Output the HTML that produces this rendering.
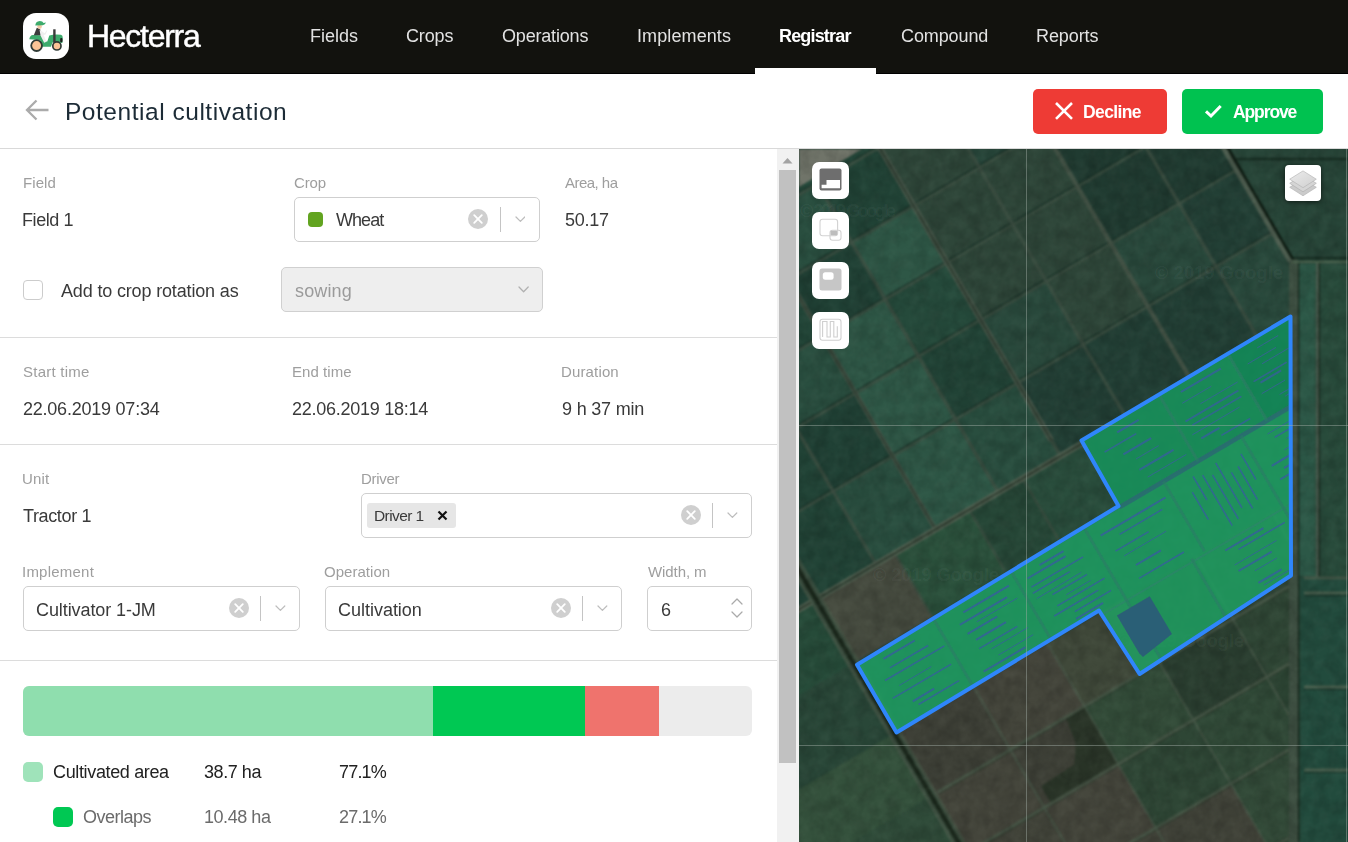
<!DOCTYPE html>
<html><head><meta charset="utf-8"><title>Hecterra</title>
<style>
html,body{margin:0;padding:0}
body{width:1348px;height:842px;position:relative;overflow:hidden;background:#fff;font-family:"Liberation Sans",sans-serif}
.a{position:absolute}
.t{position:absolute;white-space:nowrap;line-height:1;will-change:transform}
#hdr{left:0;top:0;width:1348px;height:73px;background:#12120e;border-bottom:1px solid #000}
#logo{left:23px;top:13px;width:46px;height:46px;border-radius:13px;background:#fff}
#ul{left:755px;top:68px;width:121px;height:6px;background:#fff}
#sub{left:0;top:148px;width:1348px;height:1px;background:#d9d9d9}
.btn{top:89px;height:45px;border-radius:5px}
#track{left:777px;top:149px;width:22px;height:693px;background:#f1f1f1}
#thumb{left:779px;top:170px;width:17px;height:593px;background:#c1c1c1}
#map{left:799px;top:149px;width:549px;height:693px;overflow:hidden;background:#1f473d}
.mb{width:37px;height:37px;border-radius:7px;background:#fff;left:13px}
</style></head><body>
<div id="hdr" class="a"></div>
<div id="logo" class="a">
<svg width="46" height="46" viewBox="23 13 46 46">
<path d="M29.300 39.200Q29.800 35.400 33 35.100L41.500 35.300L45 41.600L47.300 41.600L49.300 35.400Q55 33.900 61 34.800Q62.900 35.200 62.700 37.500L62.400 43L52.500 42.500L51 46.800L42 46.800L40 40Z" fill="#3dab6c"/>
<rect x="53.200" y="29.300" width="2.400" height="13.500" fill="#3a3a3a"/>
<rect x="60.200" y="38" width="2.300" height="4.200" rx="1" fill="#1d1d1d"/>
<path d="M33.800 35.200L36.800 27.800L40 29L42.500 35.300Z" fill="#3b3b3b"/>
<path d="M39.500 29.500L44.500 33.200L46.800 30.200L47.300 30.600L45.600 34.600L43.600 35L46.500 41.800L44.200 42.800L40.500 35.500Z" fill="#efefef"/>
<circle cx="39.600" cy="26.600" r="2.300" fill="#f2c9a5"/>
<path d="M35.300 25.600Q35.500 21.300 39.800 21Q42.600 21 43.600 23L46 22.600Q45.200 24.800 42.800 25.200Z" fill="#3dab6c"/>
<circle cx="36.600" cy="45.600" r="5.400" fill="#fbc396" stroke="#2f3a35" stroke-width="1.800"/>
<circle cx="56.900" cy="45.900" r="4.100" fill="#fbc396" stroke="#2f3a35" stroke-width="1.700"/>
</svg></div>
<div id="ul" class="a"></div>
<svg class="a" style="left:24px;top:98px" width="26" height="24" viewBox="24 98 26 24"><path d="M48.500 110H27.500M36.500 100.500L27 110l9.500 9.500" fill="none" stroke="#ababab" stroke-width="2.300"/></svg>
<div class="a btn" style="left:1033px;width:134px;background:#ee3b35"></div>
<div class="a btn" style="left:1182px;width:141px;background:#00c250"></div>
<svg class="a" style="left:1053px;top:100px" width="22" height="22" viewBox="1053 100 22 22"><path d="M1056 103l16 15.800M1072 103l-16 15.800" stroke="#fff" stroke-width="2.600"/></svg>
<svg class="a" style="left:1203px;top:102px" width="22" height="18" viewBox="1203 102 22 18"><path d="M1206 111.300l5 4.700 9.700-10" fill="none" stroke="#fff" stroke-width="3"/></svg>
<div id="sub" class="a"></div>
<div class="a" style="left:294px;top:197px;width:246px;height:45px;background:#fff;border:1px solid #cfcfcf;border-radius:5px;box-sizing:border-box"></div>
<div class="a" style="left:308px;top:212px;width:15px;height:15px;border-radius:4px;background:#62a420"></div>
<svg class="a" style="left:468.4px;top:209.3px" width="20" height="20" viewBox="0 0 20 20"><circle cx="10" cy="10" r="10" fill="#cfcfcf"/><path d="M6.2 6.2L13.8 13.8M13.8 6.2L6.2 13.8" stroke="#fff" stroke-width="1.8" stroke-linecap="round"/></svg>
<div class="a" style="left:500px;top:207px;width:1px;height:25px;background:#c4c4c4"></div>
<svg class="a" style="left:514.6px;top:216.3px" width="10.8" height="6.4" viewBox="-1 -1 10.8 6.4"><path d="M0 0L4.4 4.4L8.8 0" fill="none" stroke="#bdbdbd" stroke-width="1.25" stroke-linecap="round" stroke-linejoin="round"/></svg>
<div class="a" style="left:281px;top:267px;width:262px;height:45px;background:#eeeeee;border:1px solid #d0d0d0;border-radius:5px;box-sizing:border-box"></div>
<svg class="a" style="left:518.0px;top:286.20000000000005px" width="11.2" height="6.8" viewBox="-1 -1 11.2 6.8"><path d="M0 0L4.6 4.8L9.2 0" fill="none" stroke="#b0b0b0" stroke-width="1.25" stroke-linecap="round" stroke-linejoin="round"/></svg>
<div class="a" style="left:23px;top:280px;width:20px;height:20px;background:#fff;border:1px solid #cccccc;border-radius:4px;box-sizing:border-box"></div>
<div class="a" style="left:0;top:337px;width:778px;height:1px;background:#dcdcdc"></div>
<div class="a" style="left:0;top:444px;width:778px;height:1px;background:#dcdcdc"></div>
<div class="a" style="left:0;top:660px;width:778px;height:1px;background:#dcdcdc"></div>
<div class="a" style="left:361px;top:493px;width:391px;height:45px;background:#fff;border:1px solid #cfcfcf;border-radius:5px;box-sizing:border-box"></div>
<div class="a" style="left:367px;top:503px;width:89px;height:25px;border-radius:3px;background:#e6e6e6"></div>
<svg class="a" style="left:437px;top:510px" width="11" height="11" viewBox="0 0 11 11"><path d="M1.5 1.5L9.5 9.5M9.5 1.5L1.5 9.5" stroke="#111" stroke-width="2.2"/></svg>
<svg class="a" style="left:681px;top:505px" width="20" height="20" viewBox="0 0 20 20"><circle cx="10" cy="10" r="10" fill="#cfcfcf"/><path d="M6.2 6.2L13.8 13.8M13.8 6.2L6.2 13.8" stroke="#fff" stroke-width="1.8" stroke-linecap="round"/></svg>
<div class="a" style="left:712px;top:503px;width:1px;height:25px;background:#c4c4c4"></div>
<svg class="a" style="left:727.1px;top:512.3px" width="10.8" height="6.4" viewBox="-1 -1 10.8 6.4"><path d="M0 0L4.4 4.4L8.8 0" fill="none" stroke="#bdbdbd" stroke-width="1.25" stroke-linecap="round" stroke-linejoin="round"/></svg>
<div class="a" style="left:23px;top:586px;width:277px;height:45px;background:#fff;border:1px solid #cfcfcf;border-radius:5px;box-sizing:border-box"></div>
<svg class="a" style="left:228.6px;top:598px" width="20" height="20" viewBox="0 0 20 20"><circle cx="10" cy="10" r="10" fill="#cfcfcf"/><path d="M6.2 6.2L13.8 13.8M13.8 6.2L6.2 13.8" stroke="#fff" stroke-width="1.8" stroke-linecap="round"/></svg>
<div class="a" style="left:260px;top:596px;width:1px;height:25px;background:#c4c4c4"></div>
<svg class="a" style="left:275.1px;top:605.3px" width="10.8" height="6.4" viewBox="-1 -1 10.8 6.4"><path d="M0 0L4.4 4.4L8.8 0" fill="none" stroke="#bdbdbd" stroke-width="1.25" stroke-linecap="round" stroke-linejoin="round"/></svg>
<div class="a" style="left:325px;top:586px;width:297px;height:45px;background:#fff;border:1px solid #cfcfcf;border-radius:5px;box-sizing:border-box"></div>
<svg class="a" style="left:551px;top:598px" width="20" height="20" viewBox="0 0 20 20"><circle cx="10" cy="10" r="10" fill="#cfcfcf"/><path d="M6.2 6.2L13.8 13.8M13.8 6.2L6.2 13.8" stroke="#fff" stroke-width="1.8" stroke-linecap="round"/></svg>
<div class="a" style="left:582px;top:596px;width:1px;height:25px;background:#c4c4c4"></div>
<svg class="a" style="left:597.4px;top:605.3px" width="10.8" height="6.4" viewBox="-1 -1 10.8 6.4"><path d="M0 0L4.4 4.4L8.8 0" fill="none" stroke="#bdbdbd" stroke-width="1.25" stroke-linecap="round" stroke-linejoin="round"/></svg>
<div class="a" style="left:647px;top:586px;width:105px;height:45px;background:#fff;border:1px solid #cfcfcf;border-radius:5px;box-sizing:border-box"></div>
<svg class="a" style="left:731.0px;top:598.0px" width="12" height="7" viewBox="-1 -1 12 7"><path d="M0 5L5 0L10 5" fill="none" stroke="#aaaaaa" stroke-width="1.25" stroke-linecap="round" stroke-linejoin="round"/></svg>
<svg class="a" style="left:731.0px;top:610.5px" width="12" height="7" viewBox="-1 -1 12 7"><path d="M0 0L5.0 5L10 0" fill="none" stroke="#aaaaaa" stroke-width="1.25" stroke-linecap="round" stroke-linejoin="round"/></svg>
<div class="a" style="left:23px;top:686px;width:729px;height:50px;border-radius:6px;background:#ececec;overflow:hidden"><div class="a" style="left:0;top:0;width:410px;height:50px;background:#8fdeae"></div><div class="a" style="left:410px;top:0;width:152px;height:50px;background:#00c853"></div><div class="a" style="left:562px;top:0;width:74px;height:50px;background:#ef736d"></div></div>
<div class="a" style="left:23px;top:762px;width:20px;height:20px;border-radius:5px;background:#9fe3ba"></div>
<div class="a" style="left:53px;top:807px;width:20px;height:20px;border-radius:5px;background:#00c853"></div>
<span class="t" style="left:87.40px;top:20.00px;font-size:32px;font-weight:400;color:#ffffff;letter-spacing:-1.287px;-webkit-text-stroke:0.45px #fff">Hecterra</span>
<span class="t" style="left:309.59px;top:27.00px;font-size:18px;font-weight:400;color:#e2e2e2;letter-spacing:-0.009px">Fields</span>
<span class="t" style="left:406.16px;top:27.00px;font-size:18px;font-weight:400;color:#e2e2e2;letter-spacing:-0.152px">Crops</span>
<span class="t" style="left:502.16px;top:27.00px;font-size:18px;font-weight:400;color:#e2e2e2;letter-spacing:-0.183px">Operations</span>
<span class="t" style="left:636.59px;top:27.00px;font-size:18px;font-weight:400;color:#e2e2e2;letter-spacing:0.104px">Implements</span>
<span class="t" style="left:779.38px;top:27.00px;font-size:18px;font-weight:700;color:#ffffff;letter-spacing:-0.831px">Registrar</span>
<span class="t" style="left:900.66px;top:27.00px;font-size:18px;font-weight:400;color:#e2e2e2;letter-spacing:-0.100px">Compound</span>
<span class="t" style="left:1036.09px;top:27.00px;font-size:18px;font-weight:400;color:#e2e2e2;letter-spacing:-0.093px">Reports</span>
<span class="t" style="left:64.89px;top:100.25px;font-size:24.5px;font-weight:400;color:#1c2b36;letter-spacing:0.530px">Potential cultivation</span>
<span class="t" style="left:1082.91px;top:104.25px;font-size:17.5px;font-weight:700;color:#ffffff;letter-spacing:-0.620px">Decline</span>
<span class="t" style="left:1232.73px;top:104.25px;font-size:17.5px;font-weight:700;color:#ffffff;letter-spacing:-1.112px">Approve</span>
<span class="t" style="left:22.63px;top:175.00px;font-size:15px;font-weight:400;color:#9e9e9e;letter-spacing:0.075px">Field</span>
<span class="t" style="left:293.60px;top:175.00px;font-size:15px;font-weight:400;color:#9e9e9e;letter-spacing:-0.167px">Crop</span>
<span class="t" style="left:565.00px;top:175.00px;font-size:15px;font-weight:400;color:#9e9e9e;letter-spacing:-0.528px">Area, ha</span>
<span class="t" style="left:22.39px;top:211.00px;font-size:18px;font-weight:400;color:#3a3a3a;letter-spacing:-0.432px">Field 1</span>
<span class="t" style="left:336.00px;top:211.00px;font-size:18px;font-weight:400;color:#3a3a3a;letter-spacing:-0.946px">Wheat</span>
<span class="t" style="left:564.74px;top:211.00px;font-size:18px;font-weight:400;color:#3a3a3a;letter-spacing:-0.288px">50.17</span>
<span class="t" style="left:60.90px;top:282.00px;font-size:18px;font-weight:400;color:#3a3a3a;letter-spacing:-0.157px">Add to crop rotation as</span>
<span class="t" style="left:294.72px;top:282.00px;font-size:18px;font-weight:400;color:#9a9a9a;letter-spacing:0.132px">sowing</span>
<span class="t" style="left:22.63px;top:364.00px;font-size:15px;font-weight:400;color:#9e9e9e;letter-spacing:0.244px">Start time</span>
<span class="t" style="left:291.73px;top:364.00px;font-size:15px;font-weight:400;color:#9e9e9e;letter-spacing:0.055px">End time</span>
<span class="t" style="left:561.13px;top:364.00px;font-size:15px;font-weight:400;color:#9e9e9e;letter-spacing:0.145px">Duration</span>
<span class="t" style="left:22.56px;top:400.00px;font-size:18px;font-weight:400;color:#3a3a3a;letter-spacing:-0.229px">22.06.2019 07:34</span>
<span class="t" style="left:292.16px;top:400.00px;font-size:18px;font-weight:400;color:#3a3a3a;letter-spacing:-0.256px">22.06.2019 18:14</span>
<span class="t" style="left:561.66px;top:400.00px;font-size:18px;font-weight:400;color:#3a3a3a;letter-spacing:-0.188px">9 h 37 min</span>
<span class="t" style="left:22.16px;top:471.00px;font-size:15px;font-weight:400;color:#9e9e9e;letter-spacing:0.137px">Unit</span>
<span class="t" style="left:360.83px;top:471.00px;font-size:15px;font-weight:400;color:#9e9e9e;letter-spacing:-0.310px">Driver</span>
<span class="t" style="left:23.12px;top:507.00px;font-size:18px;font-weight:400;color:#3a3a3a;letter-spacing:-0.367px">Tractor 1</span>
<span class="t" style="left:374.09px;top:507.75px;font-size:15.5px;font-weight:400;color:#3a3a3a;letter-spacing:-0.588px">Driver 1</span>
<span class="t" style="left:21.93px;top:564.00px;font-size:15px;font-weight:400;color:#9e9e9e;letter-spacing:0.224px">Implement</span>
<span class="t" style="left:324.30px;top:564.00px;font-size:15px;font-weight:400;color:#9e9e9e;letter-spacing:0.034px">Operation</span>
<span class="t" style="left:647.50px;top:564.00px;font-size:15px;font-weight:400;color:#9e9e9e;letter-spacing:-0.085px">Width, m</span>
<span class="t" style="left:36.26px;top:601.00px;font-size:18px;font-weight:400;color:#3a3a3a;letter-spacing:-0.083px">Cultivator 1-JM</span>
<span class="t" style="left:338.16px;top:601.00px;font-size:18px;font-weight:400;color:#3a3a3a;letter-spacing:-0.019px">Cultivation</span>
<span class="t" style="left:660.66px;top:601.00px;font-size:18px;font-weight:400;color:#3a3a3a;letter-spacing:0.000px">6</span>
<span class="t" style="left:52.56px;top:763.00px;font-size:18px;font-weight:400;color:#222222;letter-spacing:-0.353px">Cultivated area</span>
<span class="t" style="left:204.14px;top:763.00px;font-size:18px;font-weight:400;color:#222222;letter-spacing:-0.435px">38.7 ha</span>
<span class="t" style="left:339.16px;top:763.00px;font-size:18px;font-weight:400;color:#222222;letter-spacing:-0.815px">77.1%</span>
<span class="t" style="left:83.16px;top:808.00px;font-size:18px;font-weight:400;color:#6b6b6b;letter-spacing:-0.517px">Overlaps</span>
<span class="t" style="left:204.18px;top:808.00px;font-size:18px;font-weight:400;color:#6b6b6b;letter-spacing:-0.451px">10.48 ha</span>
<span class="t" style="left:339.16px;top:808.00px;font-size:18px;font-weight:400;color:#6b6b6b;letter-spacing:-0.815px">27.1%</span>
<div id="track" class="a"></div><div id="thumb" class="a"></div>
<svg class="a" style="left:782px;top:157px" width="11" height="7" viewBox="0 0 11 7"><path d="M0.500 6.500L5.500 1l5 5.500z" fill="#a3a3a3"/></svg>
<div id="map" class="a">
<svg class="a" style="left:0;top:0" width="549" height="693" viewBox="799 149 549 693">
<defs><filter id="bl" x="-5%" y="-5%" width="110%" height="110%" color-interpolation-filters="sRGB"><feGaussianBlur stdDeviation="1"/><feColorMatrix type="matrix" values="1 0 0 0 0.012  0 1 0 0 0.004  0 0 1 0 -0.012  0 0 0 1 0"/></filter>
<filter id="nz" x="0" y="0" width="100%" height="100%"><feTurbulence type="fractalNoise" baseFrequency="0.07" numOctaves="3" seed="4"/><feColorMatrix type="matrix" values="0 0 0 0 0  0 0 0 0 0  0 0 0 0 0  0.9 0 0 0 -0.28"/></filter>
<filter id="nz2" x="0" y="0" width="100%" height="100%"><feTurbulence type="fractalNoise" baseFrequency="0.1" numOctaves="2" seed="9"/><feColorMatrix type="matrix" values="0 0 0 0 0.62  0 0 0 0 0.72  0 0 0 0 0.6  0.8 0 0 0 -0.3"/></filter>
<filter id="bl2" x="-5%" y="-5%" width="110%" height="110%"><feGaussianBlur stdDeviation="0.5"/></filter>
<clipPath id="pc"><polygon points="1290.5,316.5 1291.0,575.5 1139.6,674.0 1099.0,610.5 896.5,732.5 857.0,664.7 1118.5,506.0 1081.5,440.5"/></clipPath></defs>
<rect x="799" y="149" width="549" height="693" fill="#22423b"/>
<g filter="url(#bl)">
<polygon points="425.5,330.1 598.0,228.8 634.4,291.0 461.9,392.2" fill="#22493e"/>
<polygon points="461.9,392.2 634.4,291.0 668.8,349.6 496.3,450.8" fill="#1e4239"/>
<polygon points="496.3,450.8 668.8,349.6 702.2,406.5 529.7,507.7" fill="#22493e"/>
<polygon points="529.7,507.7 702.2,406.5 735.6,463.5 563.1,564.6" fill="#22493e"/>
<polygon points="563.1,564.6 735.6,463.5 772.6,526.4 600.1,627.6" fill="#1e4239"/>
<polygon points="600.1,627.6 772.6,526.4 815.6,599.7 643.1,700.9" fill="#1d4038"/>
<polygon points="598.0,228.8 658.4,193.4 694.8,255.5 634.4,291.0" fill="#1e4239"/>
<polygon points="634.4,291.0 694.8,255.5 729.2,314.2 668.8,349.6" fill="#20463c"/>
<polygon points="668.8,349.6 729.2,314.2 762.6,371.1 702.2,406.5" fill="#20463c"/>
<polygon points="702.2,406.5 762.6,371.1 796.0,428.0 735.6,463.5" fill="#1e4239"/>
<polygon points="735.6,463.5 796.0,428.0 832.9,491.0 772.6,526.4" fill="#1e4239"/>
<polygon points="772.6,526.4 832.9,491.0 876.0,564.3 815.6,599.7" fill="#1e4239"/>
<polygon points="658.4,193.4 717.9,158.5 754.3,220.6 694.8,255.5" fill="#1d4038"/>
<polygon points="694.8,255.5 754.3,220.6 788.7,279.3 729.2,314.2" fill="#1d4038"/>
<polygon points="729.2,314.2 788.7,279.3 822.1,336.2 762.6,371.1" fill="#20463c"/>
<polygon points="762.6,371.1 822.1,336.2 855.5,393.1 796.0,428.0" fill="#264d42"/>
<polygon points="796.0,428.0 855.5,393.1 892.5,456.1 832.9,491.0" fill="#1d4038"/>
<polygon points="832.9,491.0 892.5,456.1 935.5,529.4 876.0,564.3" fill="#264d42"/>
<polygon points="717.9,158.5 780.9,121.6 817.3,183.7 754.3,220.6" fill="#20463c"/>
<polygon points="754.3,220.6 817.3,183.7 851.7,242.3 788.7,279.3" fill="#264d42"/>
<polygon points="788.7,279.3 851.7,242.3 885.1,299.3 822.1,336.2" fill="#1d4038"/>
<polygon points="822.1,336.2 885.1,299.3 918.5,356.2 855.5,393.1" fill="#2b5649"/>
<polygon points="855.5,393.1 918.5,356.2 955.4,419.1 892.5,456.1" fill="#2b5649"/>
<polygon points="892.5,456.1 955.4,419.1 998.4,492.5 935.5,529.4" fill="#2b5649"/>
<polygon points="780.9,121.6 843.0,85.1 879.4,147.2 817.3,183.7" fill="#20463c"/>
<polygon points="817.3,183.7 879.4,147.2 913.8,205.9 851.7,242.3" fill="#1e4239"/>
<polygon points="851.7,242.3 913.8,205.9 947.2,262.8 885.1,299.3" fill="#2b5649"/>
<polygon points="885.1,299.3 947.2,262.8 980.6,319.7 918.5,356.2" fill="#22493e"/>
<polygon points="918.5,356.2 980.6,319.7 1017.5,382.7 955.4,419.1" fill="#1e4239"/>
<polygon points="955.4,419.1 1017.5,382.7 1060.5,456.0 998.4,492.5" fill="#264d42"/>
<polygon points="843.0,85.1 908.5,46.7 944.9,108.8 879.4,147.2" fill="#1f3e38"/>
<polygon points="879.4,147.2 944.9,108.8 979.3,167.4 913.8,205.9" fill="#2b453c"/>
<polygon points="913.8,205.9 979.3,167.4 1012.7,224.4 947.2,262.8" fill="#2b453c"/>
<polygon points="947.2,262.8 1012.7,224.4 1046.1,281.3 980.6,319.7" fill="#2b453c"/>
<polygon points="980.6,319.7 1046.1,281.3 1083.1,344.3 1017.5,382.7" fill="#26483f"/>
<polygon points="1017.5,382.7 1083.1,344.3 1126.1,417.6 1060.5,456.0" fill="#1f3e38"/>
<polygon points="908.5,46.7 973.2,8.7 1009.6,70.8 944.9,108.8" fill="#24453d"/>
<polygon points="944.9,108.8 1009.6,70.8 1044.0,129.5 979.3,167.4" fill="#24453d"/>
<polygon points="979.3,167.4 1044.0,129.5 1077.4,186.4 1012.7,224.4" fill="#2b453c"/>
<polygon points="1012.7,224.4 1077.4,186.4 1110.8,243.3 1046.1,281.3" fill="#2b453c"/>
<polygon points="1046.1,281.3 1110.8,243.3 1147.8,306.3 1083.1,344.3" fill="#2b453c"/>
<polygon points="1083.1,344.3 1147.8,306.3 1190.8,379.6 1126.1,417.6" fill="#1f3e38"/>
<polygon points="973.2,8.7 1041.3,-31.2 1077.8,30.9 1009.6,70.8" fill="#1f3e38"/>
<polygon points="1009.6,70.8 1077.8,30.9 1112.2,89.5 1044.0,129.5" fill="#26483f"/>
<polygon points="1044.0,129.5 1112.2,89.5 1145.6,146.4 1077.4,186.4" fill="#1d3a34"/>
<polygon points="1077.4,186.4 1145.6,146.4 1179.0,203.4 1110.8,243.3" fill="#1d3a34"/>
<polygon points="1110.8,243.3 1179.0,203.4 1215.9,266.3 1147.8,306.3" fill="#26483f"/>
<polygon points="1147.8,306.3 1215.9,266.3 1258.9,339.6 1190.8,379.6" fill="#1f3e38"/>
<polygon points="1041.3,-31.2 1100.0,-65.6 1136.4,-3.5 1077.8,30.9" fill="#1f3e38"/>
<polygon points="1077.8,30.9 1136.4,-3.5 1170.8,55.1 1112.2,89.5" fill="#1f3e38"/>
<polygon points="1112.2,89.5 1170.8,55.1 1204.2,112.0 1145.6,146.4" fill="#22423b"/>
<polygon points="1145.6,146.4 1204.2,112.0 1237.6,169.0 1179.0,203.4" fill="#1d3a34"/>
<polygon points="1179.0,203.4 1237.6,169.0 1274.5,231.9 1215.9,266.3" fill="#1f3e38"/>
<polygon points="1215.9,266.3 1274.5,231.9 1317.6,305.2 1258.9,339.6" fill="#26483f"/>
<polygon points="1100.0,-65.6 1167.2,-105.1 1203.7,-43.0 1136.4,-3.5" fill="#26483f"/>
<polygon points="1136.4,-3.5 1203.7,-43.0 1238.1,15.6 1170.8,55.1" fill="#26483f"/>
<polygon points="1170.8,55.1 1238.1,15.6 1271.5,72.6 1204.2,112.0" fill="#26483f"/>
<polygon points="1204.2,112.0 1271.5,72.6 1304.9,129.5 1237.6,169.0" fill="#1f3e38"/>
<polygon points="1237.6,169.0 1304.9,129.5 1341.8,192.5 1274.5,231.9" fill="#22423b"/>
<polygon points="1274.5,231.9 1341.8,192.5 1384.8,265.8 1317.6,305.2" fill="#24453d"/>
<line x1="461.9" y1="392.2" x2="1151.9" y2="-12.6" stroke="#3a4d45" stroke-width="3.5" stroke-opacity="0.8"/>
<line x1="460.9" y1="390.4" x2="1150.9" y2="-14.4" stroke="#14302a" stroke-width="1.3" stroke-opacity="0.85"/>
<line x1="496.3" y1="450.8" x2="1186.3" y2="46.0" stroke="#3a4d45" stroke-width="3.5" stroke-opacity="0.8"/>
<line x1="495.3" y1="449.1" x2="1185.3" y2="44.3" stroke="#14302a" stroke-width="1.3" stroke-opacity="0.85"/>
<line x1="529.7" y1="507.7" x2="1219.7" y2="102.9" stroke="#3a4d45" stroke-width="3.5" stroke-opacity="0.8"/>
<line x1="528.7" y1="506.0" x2="1218.7" y2="101.2" stroke="#14302a" stroke-width="1.3" stroke-opacity="0.85"/>
<line x1="563.1" y1="564.6" x2="1253.1" y2="159.9" stroke="#3a4d45" stroke-width="3.5" stroke-opacity="0.8"/>
<line x1="562.1" y1="562.9" x2="1252.1" y2="158.1" stroke="#14302a" stroke-width="1.3" stroke-opacity="0.85"/>
<line x1="600.1" y1="627.6" x2="1290.1" y2="222.8" stroke="#3a4d45" stroke-width="3.5" stroke-opacity="0.8"/>
<line x1="599.1" y1="625.9" x2="1289.1" y2="221.1" stroke="#14302a" stroke-width="1.3" stroke-opacity="0.85"/>
<line x1="598.0" y1="228.8" x2="815.6" y2="599.7" stroke="#3a4d45" stroke-width="3.5" stroke-opacity="0.85"/>
<line x1="658.4" y1="193.4" x2="876.0" y2="564.3" stroke="#3a4d45" stroke-width="3.5" stroke-opacity="0.85"/>
<line x1="717.9" y1="158.5" x2="935.5" y2="529.4" stroke="#3a4d45" stroke-width="3.5" stroke-opacity="0.85"/>
<line x1="780.9" y1="121.6" x2="998.4" y2="492.5" stroke="#3a4d45" stroke-width="3.5" stroke-opacity="0.85"/>
<line x1="843.0" y1="85.1" x2="1060.5" y2="456.0" stroke="#3a4d45" stroke-width="3.5" stroke-opacity="0.85"/>
<line x1="908.5" y1="46.7" x2="1126.1" y2="417.6" stroke="#3a4d45" stroke-width="3.5" stroke-opacity="0.85"/>
<line x1="973.2" y1="8.7" x2="1190.8" y2="379.6" stroke="#3a4d45" stroke-width="3.5" stroke-opacity="0.85"/>
<line x1="1041.3" y1="-31.2" x2="1258.9" y2="339.6" stroke="#3a4d45" stroke-width="3.5" stroke-opacity="0.85"/>
<line x1="1100.0" y1="-65.6" x2="1317.6" y2="305.2" stroke="#3a4d45" stroke-width="3.5" stroke-opacity="0.85"/>
<line x1="1167.2" y1="-105.1" x2="1384.8" y2="265.8" stroke="#3a4d45" stroke-width="3.5" stroke-opacity="0.85"/>
<line x1="873.3" y1="136.9" x2="1051.4" y2="440.5" stroke="#44554c" stroke-width="5.5"/>
<line x1="873.3" y1="136.9" x2="1051.4" y2="440.5" stroke="#1f332b" stroke-width="1.3"/>
<line x1="768.5" y1="244.8" x2="935.5" y2="529.4" stroke="#3f5148" stroke-width="4.5"/>
<line x1="768.5" y1="244.8" x2="935.5" y2="529.4" stroke="#1f332b" stroke-width="1"/>
<line x1="993.4" y1="43.2" x2="1190.8" y2="379.6" stroke="#3f5148" stroke-width="4.5" stroke-opacity="0.9"/>
<line x1="1216.4" y1="132.7" x2="1291.2" y2="260.4" stroke="#4a5b51" stroke-width="6"/>
<line x1="1218.9" y1="131.2" x2="1293.8" y2="258.9" stroke="#0f221c" stroke-width="2"/>
<polygon points="799,149 862,149 799,187" fill="#6d736c"/>
<line x1="582.2" y1="340.2" x2="746.0" y2="244.0" stroke="#2a3a33" stroke-width="3"/>
<polygon points="643.1,700.9 818.2,598.2 855.6,662.0 680.5,764.8" fill="#234a3c"/>
<polygon points="818.2,598.2 894.9,553.2 932.4,617.0 855.6,662.0" fill="#434a42"/>
<polygon points="894.9,553.2 969.1,509.7 1006.5,573.5 932.4,617.0" fill="#28503f"/>
<polygon points="969.1,509.7 1022.6,478.3 1060.0,542.1 1006.5,573.5" fill="#23463a"/>
<polygon points="1022.6,478.3 1082.1,443.4 1119.5,507.2 1060.0,542.1" fill="#264c3f"/>
<polygon points="680.5,764.8 855.6,662.0 896.6,731.9 721.5,834.6" fill="#26463b"/>
<line x1="818.2" y1="598.2" x2="855.6" y2="662.0" stroke="#3a4d45" stroke-width="3" stroke-opacity="0.6"/>
<line x1="894.9" y1="553.2" x2="932.4" y2="617.0" stroke="#3a4d45" stroke-width="3" stroke-opacity="0.6"/>
<line x1="969.1" y1="509.7" x2="1006.5" y2="573.5" stroke="#3a4d45" stroke-width="3" stroke-opacity="0.6"/>
<line x1="1022.6" y1="478.3" x2="1060.0" y2="542.1" stroke="#3a4d45" stroke-width="3" stroke-opacity="0.6"/>
<line x1="1082.1" y1="443.4" x2="1119.5" y2="507.2" stroke="#3a4d45" stroke-width="3" stroke-opacity="0.6"/>
<line x1="643.1" y1="700.9" x2="1084.7" y2="441.9" stroke="#4d5e53" stroke-width="6"/>
<line x1="643.1" y1="700.9" x2="1084.7" y2="441.9" stroke="#1c2e26" stroke-width="1.4"/>
<polygon points="721.5,834.6 896.6,731.9 933.5,794.9 758.4,897.6" fill="#31503f"/>
<polygon points="758.4,897.6 933.5,794.9 967.4,852.6 792.4,955.4" fill="#2c4a3c"/>
<polygon points="792.4,955.4 967.4,852.6 1004.9,916.5 829.8,1019.2" fill="#244238"/>
<polygon points="829.8,1019.2 1004.9,916.5 1043.3,982.0 868.2,1084.7" fill="#244238"/>
<polygon points="868.2,1084.7 1043.3,982.0 1081.3,1046.7 906.2,1149.4" fill="#26463b"/>
<polygon points="896.6,731.9 973.4,686.9 1010.3,749.8 933.5,794.9" fill="#3b3f3a"/>
<polygon points="933.5,794.9 1010.3,749.8 1044.2,807.6 967.4,852.6" fill="#41443e"/>
<polygon points="967.4,852.6 1044.2,807.6 1081.6,871.4 1004.9,916.5" fill="#3e423c"/>
<polygon points="1004.9,916.5 1081.6,871.4 1120.1,937.0 1043.3,982.0" fill="#274034"/>
<polygon points="1043.3,982.0 1120.1,937.0 1158.1,1001.7 1081.3,1046.7" fill="#2f493b"/>
<polygon points="973.4,686.9 1047.5,643.3 1084.5,706.3 1010.3,749.8" fill="#41443e"/>
<polygon points="1010.3,749.8 1084.5,706.3 1118.4,764.1 1044.2,807.6" fill="#3b3f3a"/>
<polygon points="1044.2,807.6 1118.4,764.1 1155.8,827.9 1081.6,871.4" fill="#41443e"/>
<polygon points="1081.6,871.4 1155.8,827.9 1194.3,893.5 1120.1,937.0" fill="#3e423c"/>
<polygon points="1120.1,937.0 1194.3,893.5 1232.2,958.2 1158.1,1001.7" fill="#274034"/>
<polygon points="1047.5,643.3 1122.6,599.3 1159.5,662.3 1084.5,706.3" fill="#3d483d"/>
<polygon points="1084.5,706.3 1159.5,662.3 1193.4,720.1 1118.4,764.1" fill="#2f4a3b"/>
<polygon points="1118.4,764.1 1193.4,720.1 1230.9,783.9 1155.8,827.9" fill="#2b4538"/>
<polygon points="1155.8,827.9 1230.9,783.9 1269.3,849.4 1194.3,893.5" fill="#3e423c"/>
<polygon points="1194.3,893.5 1269.3,849.4 1307.3,914.1 1232.2,958.2" fill="#3e423c"/>
<polygon points="1122.6,599.3 1195.9,556.3 1232.8,619.3 1159.5,662.3" fill="#263c33"/>
<polygon points="1159.5,662.3 1232.8,619.3 1266.7,677.1 1193.4,720.1" fill="#273d33"/>
<polygon points="1193.4,720.1 1266.7,677.1 1304.2,740.9 1230.9,783.9" fill="#2d483a"/>
<polygon points="1230.9,783.9 1304.2,740.9 1342.6,806.4 1269.3,849.4" fill="#2f493b"/>
<polygon points="1269.3,849.4 1342.6,806.4 1380.6,871.1 1307.3,914.1" fill="#2f493b"/>
<polygon points="1195.9,556.3 1271.8,511.8 1308.7,574.7 1232.8,619.3" fill="#2a4137"/>
<polygon points="1232.8,619.3 1308.7,574.7 1342.6,632.5 1266.7,677.1" fill="#2c4538"/>
<polygon points="1266.7,677.1 1342.6,632.5 1380.1,696.4 1304.2,740.9" fill="#294336"/>
<polygon points="1304.2,740.9 1380.1,696.4 1418.5,761.9 1342.6,806.4" fill="#2d483a"/>
<polygon points="1342.6,806.4 1418.5,761.9 1456.5,826.6 1380.6,871.1" fill="#274034"/>
<polygon points="1271.8,511.8 1346.8,467.8 1383.8,530.7 1308.7,574.7" fill="#2d483a"/>
<polygon points="1308.7,574.7 1383.8,530.7 1417.7,588.5 1342.6,632.5" fill="#294336"/>
<polygon points="1342.6,632.5 1417.7,588.5 1455.1,652.3 1380.1,696.4" fill="#274034"/>
<polygon points="1380.1,696.4 1455.1,652.3 1493.6,717.9 1418.5,761.9" fill="#294336"/>
<polygon points="1418.5,761.9 1493.6,717.9 1531.5,782.6 1456.5,826.6" fill="#294336"/>
<polygon points="1346.8,467.8 1420.1,424.8 1457.1,487.7 1383.8,530.7" fill="#2f493b"/>
<polygon points="1383.8,530.7 1457.1,487.7 1491.0,545.5 1417.7,588.5" fill="#294336"/>
<polygon points="1417.7,588.5 1491.0,545.5 1528.4,609.3 1455.1,652.3" fill="#2d483a"/>
<polygon points="1455.1,652.3 1528.4,609.3 1566.9,674.9 1493.6,717.9" fill="#294336"/>
<polygon points="1493.6,717.9 1566.9,674.9 1604.8,739.6 1531.5,782.6" fill="#294336"/>
<polygon points="1065.5,717.4 1084.5,706.3 1118.4,764.1 1051.1,803.6 1041.0,786.3 1074.5,764.3 1075.7,742.8" fill="#27342b"/>
<polygon points="1000.3,908.7 1062.7,882.6 1004.9,916.5" fill="#2a352c"/>
<line x1="937.8" y1="792.3" x2="1620.9" y2="391.6" stroke="#46564b" stroke-width="3.5" stroke-opacity="0.8"/>
<line x1="938.9" y1="794.1" x2="1622.0" y2="393.3" stroke="#1e2f27" stroke-width="1" stroke-opacity="0.6"/>
<line x1="971.8" y1="850.1" x2="1654.8" y2="449.4" stroke="#46564b" stroke-width="3.5" stroke-opacity="0.8"/>
<line x1="972.8" y1="851.8" x2="1655.9" y2="451.1" stroke="#1e2f27" stroke-width="1" stroke-opacity="0.6"/>
<line x1="1009.2" y1="913.9" x2="1692.3" y2="513.2" stroke="#46564b" stroke-width="3.5" stroke-opacity="0.8"/>
<line x1="1010.2" y1="915.7" x2="1693.3" y2="514.9" stroke="#1e2f27" stroke-width="1" stroke-opacity="0.6"/>
<line x1="1047.7" y1="979.5" x2="1730.8" y2="578.7" stroke="#46564b" stroke-width="3.5" stroke-opacity="0.8"/>
<line x1="1048.7" y1="981.2" x2="1731.8" y2="580.5" stroke="#1e2f27" stroke-width="1" stroke-opacity="0.6"/>
<line x1="1085.6" y1="1044.2" x2="1768.7" y2="643.4" stroke="#46564b" stroke-width="3.5" stroke-opacity="0.8"/>
<line x1="1086.6" y1="1045.9" x2="1769.7" y2="645.2" stroke="#1e2f27" stroke-width="1" stroke-opacity="0.6"/>
<line x1="973.4" y1="686.9" x2="1158.1" y2="1001.7" stroke="#485a4e" stroke-width="2.5" stroke-opacity="0.6"/>
<line x1="1047.5" y1="643.3" x2="1232.2" y2="958.2" stroke="#485a4e" stroke-width="2.5" stroke-opacity="0.6"/>
<line x1="1122.6" y1="599.3" x2="1307.3" y2="914.1" stroke="#485a4e" stroke-width="2.5" stroke-opacity="0.6"/>
<line x1="1195.9" y1="556.3" x2="1380.6" y2="871.1" stroke="#485a4e" stroke-width="2.5" stroke-opacity="0.6"/>
<line x1="1271.8" y1="511.8" x2="1456.5" y2="826.6" stroke="#485a4e" stroke-width="2.5" stroke-opacity="0.6"/>
<line x1="1346.8" y1="467.8" x2="1531.5" y2="782.6" stroke="#485a4e" stroke-width="2.5" stroke-opacity="0.6"/>
<line x1="1420.1" y1="424.8" x2="1604.8" y2="739.6" stroke="#485a4e" stroke-width="2.5" stroke-opacity="0.6"/>
<line x1="790.3" y1="556.6" x2="1078.7" y2="1048.2" stroke="#384d42" stroke-width="10"/>
<line x1="786.0" y1="559.1" x2="1074.4" y2="1050.8" stroke="#4a5d50" stroke-width="1.5" stroke-opacity="0.8"/>
<line x1="795.5" y1="553.6" x2="1083.9" y2="1045.2" stroke="#46584c" stroke-width="2" stroke-opacity="0.7"/>
<line x1="790.7" y1="556.3" x2="1079.1" y2="1048.0" stroke="#17261e" stroke-width="4.500" stroke-dasharray="7 3 4 2 9 4" stroke-linecap="round"/>
<polygon points="1226,140 1360,140 1360,850 1290,850 1290,259" fill="#24443b"/>
<rect x="1289" y="259" width="9" height="600" fill="#3b4f45"/>
<line x1="1298.700" y1="262" x2="1298.700" y2="842" stroke="#172a22" stroke-width="1.600"/>
<rect x="1299.500" y="264" width="16" height="312" fill="#29574a"/>
<rect x="1316" y="262" width="2.500" height="318" fill="#465a50"/>
<line x1="1319.500" y1="262" x2="1319.500" y2="580" stroke="#172a22" stroke-width="1.300"/>
<rect x="1320.500" y="264" width="28" height="312" fill="#254a3e"/>
<line x1="1236" y1="159" x2="1348" y2="159" stroke="#142c25" stroke-width="2.500"/>
<line x1="1292" y1="258" x2="1348" y2="258" stroke="#142c25" stroke-width="2.500"/>
<line x1="1292" y1="262" x2="1348" y2="262" stroke="#47604f" stroke-width="2"/>
<rect x="1300" y="578" width="50" height="270" fill="#1f4a40"/>
<line x1="1304" y1="593" x2="1348" y2="593" stroke="#476052" stroke-width="3"/>
<line x1="1304" y1="595.5" x2="1348" y2="595.5" stroke="#15302a" stroke-width="1.200"/>
<line x1="1304" y1="687" x2="1348" y2="687" stroke="#476052" stroke-width="3"/>
<line x1="1304" y1="689.5" x2="1348" y2="689.5" stroke="#15302a" stroke-width="1.200"/>
<line x1="1304" y1="770" x2="1348" y2="770" stroke="#476052" stroke-width="3"/>
<line x1="1304" y1="772.5" x2="1348" y2="772.5" stroke="#15302a" stroke-width="1.200"/>
<line x1="1304" y1="578" x2="1348" y2="578" stroke="#3f564a" stroke-width="3"/>
<line x1="1215.1" y1="133.5" x2="1289.9" y2="261.1" stroke="#4b5d53" stroke-width="5"/>
<line x1="1218.1" y1="131.7" x2="1293.0" y2="259.4" stroke="#0b1a15" stroke-width="2.6"/>
</g>
<rect x="799" y="149" width="549" height="693" filter="url(#nz)" opacity=".3"/>
<rect x="799" y="149" width="549" height="693" filter="url(#nz2)" opacity=".1"/>
<g font-family="Liberation Sans, sans-serif" font-weight="700" font-size="18" fill="#fff" fill-opacity=".05"><text x="1155" y="279" textLength="128">© 2019 Google</text><text x="800" y="217" textLength="96">© 2019 Google</text><text x="873" y="581" textLength="126">© 2019 Google</text><text x="1118" y="647" textLength="126">© 2019 Google</text></g>
<polygon points="1290.5,316.5 1291.0,575.5 1139.6,674.0 1099.0,610.5 896.5,732.5 857.0,664.7 1118.5,506.0 1081.5,440.5" fill="#1fa464" fill-opacity=".82"/>
<g clip-path="url(#pc)" filter="url(#bl2)">
<polygon points="1069.3,439.3 1328.0,287.5 1370.5,360.0 1111.8,511.8" fill="#0e6a48" fill-opacity="0.2"/>
<polygon points="1224.5,348.2 1328.0,287.5 1370.5,360.0 1267.0,420.7" fill="#0e6a48" fill-opacity="0.2"/>
<line x1="1119.5" y1="507.2" x2="1456.8" y2="309.4" stroke="#2a6a72" stroke-width="4.5" stroke-opacity="0.85"/>
<line x1="855.6" y1="662.0" x2="1119.5" y2="507.2" stroke="#2a7d66" stroke-width="3" stroke-opacity="0.5"/>
<line x1="1102.5" y1="614.6" x2="1499.3" y2="381.8" stroke="#2f7f70" stroke-width="2" stroke-opacity="0.5"/>
<line x1="932.4" y1="617.0" x2="973.4" y2="686.9" stroke="#2a7d66" stroke-width="3" stroke-opacity="0.65"/>
<line x1="1010.9" y1="571.0" x2="1051.8" y2="640.8" stroke="#2a7d66" stroke-width="3" stroke-opacity="0.65"/>
<line x1="1084.2" y1="527.9" x2="1162.1" y2="660.8" stroke="#2a7d66" stroke-width="3" stroke-opacity="0.65"/>
<line x1="1191.6" y1="558.8" x2="1228.5" y2="621.8" stroke="#2a7d66" stroke-width="3" stroke-opacity="0.65"/>
<line x1="1163.5" y1="481.4" x2="1204.5" y2="551.3" stroke="#2a7d66" stroke-width="3" stroke-opacity="0.65"/>
<line x1="1241.1" y1="435.9" x2="1319.1" y2="568.7" stroke="#2a7d66" stroke-width="3" stroke-opacity="0.65"/>
<line x1="1158.6" y1="393.9" x2="1198.0" y2="461.2" stroke="#2a7d66" stroke-width="3" stroke-opacity="0.65"/>
<line x1="1227.6" y1="353.4" x2="1267.0" y2="420.7" stroke="#2a7d66" stroke-width="3" stroke-opacity="0.65"/>
<polygon points="1116.9,615.4 1149.7,596.2 1172.0,634.1 1143.0,657.0 1139.2,653.3" fill="#2c5f76"/>
<line x1="883.4" y1="658.9" x2="914.7" y2="640.5" stroke="#35609a" stroke-width="2" stroke-opacity="0.85"/>
<line x1="889.9" y1="667.9" x2="928.2" y2="645.5" stroke="#35609a" stroke-width="1.5" stroke-opacity="0.85"/>
<line x1="885.1" y1="680.5" x2="944.4" y2="645.8" stroke="#35609a" stroke-width="1.5" stroke-opacity="0.85"/>
<line x1="899.2" y1="685.5" x2="931.3" y2="666.6" stroke="#35609a" stroke-width="1" stroke-opacity="0.85"/>
<line x1="892.7" y1="698.4" x2="951.2" y2="664.1" stroke="#35609a" stroke-width="1.5" stroke-opacity="0.85"/>
<line x1="912.8" y1="701.3" x2="934.2" y2="688.7" stroke="#35609a" stroke-width="2" stroke-opacity="0.85"/>
<line x1="918.5" y1="704.5" x2="959.1" y2="680.7" stroke="#35609a" stroke-width="1.5" stroke-opacity="0.85"/>
<line x1="963.3" y1="612.4" x2="1009.0" y2="585.6" stroke="#35609a" stroke-width="2" stroke-opacity="0.85"/>
<line x1="959.8" y1="624.9" x2="1007.1" y2="597.1" stroke="#35609a" stroke-width="2" stroke-opacity="0.85"/>
<line x1="976.8" y1="621.8" x2="1017.3" y2="598.1" stroke="#35609a" stroke-width="1" stroke-opacity="0.85"/>
<line x1="967.6" y1="633.8" x2="997.2" y2="616.5" stroke="#35609a" stroke-width="2" stroke-opacity="0.85"/>
<line x1="976.0" y1="639.8" x2="1006.0" y2="622.2" stroke="#35609a" stroke-width="2" stroke-opacity="0.85"/>
<line x1="979.2" y1="648.7" x2="1017.3" y2="626.4" stroke="#35609a" stroke-width="1.5" stroke-opacity="0.85"/>
<line x1="991.6" y1="648.9" x2="1028.2" y2="627.4" stroke="#35609a" stroke-width="1" stroke-opacity="0.85"/>
<line x1="998.4" y1="655.1" x2="1033.2" y2="634.7" stroke="#35609a" stroke-width="1" stroke-opacity="0.85"/>
<line x1="983.6" y1="671.7" x2="1025.5" y2="647.1" stroke="#35609a" stroke-width="2" stroke-opacity="0.85"/>
<line x1="1039.5" y1="565.2" x2="1063.5" y2="551.1" stroke="#35609a" stroke-width="2" stroke-opacity="0.85"/>
<line x1="1027.5" y1="578.5" x2="1065.6" y2="556.1" stroke="#35609a" stroke-width="2" stroke-opacity="0.85"/>
<line x1="1031.4" y1="587.1" x2="1083.1" y2="556.8" stroke="#35609a" stroke-width="1.5" stroke-opacity="0.85"/>
<line x1="1032.8" y1="593.4" x2="1069.8" y2="571.7" stroke="#35609a" stroke-width="1.5" stroke-opacity="0.85"/>
<line x1="1036.7" y1="598.6" x2="1081.3" y2="572.4" stroke="#35609a" stroke-width="1" stroke-opacity="0.85"/>
<line x1="1052.5" y1="594.7" x2="1087.0" y2="574.4" stroke="#35609a" stroke-width="1.5" stroke-opacity="0.85"/>
<line x1="1066.3" y1="594.7" x2="1090.7" y2="580.4" stroke="#35609a" stroke-width="1" stroke-opacity="0.85"/>
<line x1="1057.3" y1="605.8" x2="1104.6" y2="578.1" stroke="#35609a" stroke-width="1.5" stroke-opacity="0.85"/>
<line x1="1054.2" y1="616.0" x2="1098.3" y2="590.2" stroke="#35609a" stroke-width="1.5" stroke-opacity="0.85"/>
<line x1="1074.8" y1="611.6" x2="1111.1" y2="590.3" stroke="#35609a" stroke-width="1.5" stroke-opacity="0.85"/>
<line x1="1076.1" y1="618.8" x2="1103.1" y2="602.9" stroke="#35609a" stroke-width="2" stroke-opacity="0.85"/>
<line x1="1100.6" y1="535.6" x2="1165.5" y2="497.5" stroke="#35609a" stroke-width="2" stroke-opacity="0.85"/>
<line x1="1119.6" y1="534.4" x2="1162.3" y2="509.3" stroke="#35609a" stroke-width="1.5" stroke-opacity="0.85"/>
<line x1="1115.5" y1="551.2" x2="1148.7" y2="531.7" stroke="#35609a" stroke-width="1.5" stroke-opacity="0.85"/>
<line x1="1124.1" y1="555.9" x2="1166.2" y2="531.2" stroke="#35609a" stroke-width="1" stroke-opacity="0.85"/>
<line x1="1135.9" y1="565.0" x2="1160.9" y2="550.4" stroke="#35609a" stroke-width="2" stroke-opacity="0.85"/>
<line x1="1139.1" y1="578.3" x2="1183.9" y2="552.0" stroke="#35609a" stroke-width="1.5" stroke-opacity="0.85"/>
<line x1="1225.3" y1="550.5" x2="1263.4" y2="528.1" stroke="#35609a" stroke-width="2" stroke-opacity="0.85"/>
<line x1="1238.5" y1="549.4" x2="1284.7" y2="522.3" stroke="#35609a" stroke-width="1.5" stroke-opacity="0.85"/>
<line x1="1234.6" y1="565.0" x2="1276.6" y2="540.4" stroke="#35609a" stroke-width="1" stroke-opacity="0.85"/>
<line x1="1238.6" y1="571.0" x2="1271.7" y2="551.6" stroke="#35609a" stroke-width="2" stroke-opacity="0.85"/>
<line x1="1254.9" y1="570.8" x2="1277.0" y2="557.9" stroke="#35609a" stroke-width="1" stroke-opacity="0.85"/>
<line x1="1258.4" y1="582.9" x2="1281.5" y2="569.4" stroke="#35609a" stroke-width="2" stroke-opacity="0.85"/>
<line x1="1263.9" y1="585.1" x2="1289.2" y2="570.3" stroke="#35609a" stroke-width="1" stroke-opacity="0.85"/>
<line x1="1312.0" y1="501.0" x2="1332.7" y2="488.9" stroke="#35609a" stroke-width="2" stroke-opacity="0.85"/>
<line x1="1308.4" y1="512.3" x2="1355.0" y2="484.9" stroke="#35609a" stroke-width="1.5" stroke-opacity="0.85"/>
<line x1="1330.1" y1="514.5" x2="1349.7" y2="503.0" stroke="#35609a" stroke-width="2" stroke-opacity="0.85"/>
<line x1="1332.8" y1="523.4" x2="1360.4" y2="507.2" stroke="#35609a" stroke-width="1" stroke-opacity="0.85"/>
<line x1="1317.8" y1="544.8" x2="1375.5" y2="510.9" stroke="#35609a" stroke-width="1.5" stroke-opacity="0.85"/>
<line x1="1342.3" y1="542.1" x2="1364.5" y2="529.1" stroke="#35609a" stroke-width="1.5" stroke-opacity="0.85"/>
<line x1="1117.2" y1="432.4" x2="1138.7" y2="419.8" stroke="#35609a" stroke-width="2" stroke-opacity="0.85"/>
<line x1="1104.6" y1="452.2" x2="1136.2" y2="433.7" stroke="#35609a" stroke-width="1.5" stroke-opacity="0.85"/>
<line x1="1123.4" y1="454.4" x2="1151.2" y2="438.1" stroke="#35609a" stroke-width="2" stroke-opacity="0.85"/>
<line x1="1136.0" y1="459.0" x2="1158.8" y2="445.6" stroke="#35609a" stroke-width="1" stroke-opacity="0.85"/>
<line x1="1139.4" y1="469.9" x2="1173.5" y2="449.8" stroke="#35609a" stroke-width="2" stroke-opacity="0.85"/>
<line x1="1147.7" y1="477.1" x2="1186.3" y2="454.4" stroke="#35609a" stroke-width="1" stroke-opacity="0.85"/>
<line x1="1180.9" y1="392.0" x2="1220.8" y2="368.7" stroke="#35609a" stroke-width="2" stroke-opacity="0.85"/>
<line x1="1182.3" y1="403.2" x2="1211.2" y2="386.3" stroke="#35609a" stroke-width="1" stroke-opacity="0.85"/>
<line x1="1200.3" y1="403.8" x2="1237.7" y2="381.9" stroke="#35609a" stroke-width="1" stroke-opacity="0.85"/>
<line x1="1185.5" y1="421.5" x2="1238.4" y2="390.5" stroke="#35609a" stroke-width="2" stroke-opacity="0.85"/>
<line x1="1192.3" y1="425.1" x2="1241.4" y2="396.4" stroke="#35609a" stroke-width="1.5" stroke-opacity="0.85"/>
<line x1="1192.3" y1="434.8" x2="1239.5" y2="407.1" stroke="#35609a" stroke-width="1" stroke-opacity="0.85"/>
<line x1="1201.3" y1="438.3" x2="1219.4" y2="427.8" stroke="#35609a" stroke-width="2" stroke-opacity="0.85"/>
<line x1="1221.4" y1="435.4" x2="1250.2" y2="418.5" stroke="#35609a" stroke-width="1.5" stroke-opacity="0.85"/>
<line x1="1257.1" y1="347.9" x2="1278.1" y2="335.6" stroke="#35609a" stroke-width="1" stroke-opacity="0.85"/>
<line x1="1247.8" y1="363.9" x2="1276.1" y2="347.3" stroke="#35609a" stroke-width="1" stroke-opacity="0.85"/>
<line x1="1262.0" y1="363.8" x2="1291.3" y2="346.6" stroke="#35609a" stroke-width="1" stroke-opacity="0.85"/>
<line x1="1253.6" y1="381.7" x2="1286.7" y2="362.2" stroke="#35609a" stroke-width="1.5" stroke-opacity="0.85"/>
<line x1="1260.5" y1="382.6" x2="1281.1" y2="370.5" stroke="#35609a" stroke-width="2" stroke-opacity="0.85"/>
<line x1="1261.7" y1="393.7" x2="1285.0" y2="380.1" stroke="#35609a" stroke-width="1" stroke-opacity="0.85"/>
<line x1="1279.6" y1="394.4" x2="1293.9" y2="386.0" stroke="#35609a" stroke-width="1" stroke-opacity="0.85"/>
<line x1="1285.3" y1="396.0" x2="1310.6" y2="381.1" stroke="#35609a" stroke-width="1" stroke-opacity="0.85"/>
<line x1="1267.5" y1="434.0" x2="1290.4" y2="420.5" stroke="#35609a" stroke-width="1" stroke-opacity="0.85"/>
<line x1="1274.7" y1="437.4" x2="1308.4" y2="417.7" stroke="#35609a" stroke-width="1.5" stroke-opacity="0.85"/>
<line x1="1286.4" y1="438.6" x2="1312.4" y2="423.4" stroke="#35609a" stroke-width="1" stroke-opacity="0.85"/>
<line x1="1284.2" y1="449.9" x2="1311.8" y2="433.7" stroke="#35609a" stroke-width="1" stroke-opacity="0.85"/>
<line x1="1271.7" y1="465.8" x2="1308.8" y2="444.0" stroke="#35609a" stroke-width="2" stroke-opacity="0.85"/>
<line x1="1284.0" y1="468.2" x2="1328.7" y2="442.0" stroke="#35609a" stroke-width="2" stroke-opacity="0.85"/>
<line x1="1280.1" y1="479.5" x2="1323.9" y2="453.8" stroke="#35609a" stroke-width="2" stroke-opacity="0.85"/>
<line x1="1304.2" y1="471.0" x2="1330.4" y2="455.6" stroke="#35609a" stroke-width="1" stroke-opacity="0.85"/>
<line x1="1297.7" y1="482.9" x2="1336.2" y2="460.3" stroke="#35609a" stroke-width="1" stroke-opacity="0.85"/>
<line x1="1192.3" y1="492.2" x2="1208.4" y2="519.6" stroke="#35609a" stroke-width="1.5" stroke-opacity="0.85"/>
<line x1="1193.1" y1="476.3" x2="1207.0" y2="500.0" stroke="#35609a" stroke-width="1.5" stroke-opacity="0.85"/>
<line x1="1202.6" y1="475.2" x2="1232.2" y2="525.7" stroke="#35609a" stroke-width="1.5" stroke-opacity="0.85"/>
<line x1="1212.5" y1="474.8" x2="1238.4" y2="518.9" stroke="#35609a" stroke-width="1.5" stroke-opacity="0.85"/>
<line x1="1215.7" y1="462.9" x2="1242.0" y2="507.8" stroke="#35609a" stroke-width="1.5" stroke-opacity="0.85"/>
<line x1="1231.4" y1="472.4" x2="1252.6" y2="508.4" stroke="#35609a" stroke-width="1.5" stroke-opacity="0.85"/>
<line x1="1238.1" y1="466.4" x2="1257.5" y2="499.6" stroke="#35609a" stroke-width="1.5" stroke-opacity="0.85"/>
<line x1="1240.9" y1="453.9" x2="1256.0" y2="479.7" stroke="#35609a" stroke-width="1.5" stroke-opacity="0.85"/>
</g>
<polygon points="1290.5,316.5 1291.0,575.5 1139.6,674.0 1099.0,610.5 896.5,732.5 857.0,664.7 1118.5,506.0 1081.5,440.5" fill="none" stroke="#2f86fb" stroke-width="4" stroke-linejoin="round"/>
<path d="M1026.500 149V842M1346.500 149V842M799 425.500H1348M799 745.500H1348" stroke="#a3b0a9" stroke-opacity=".45" stroke-width="1" fill="none"/>
</svg>
<div class="a mb" style="top:13px"><svg width="37" height="37" viewBox="812 162 37 37"><rect x="819.500" y="168.600" width="22" height="22" rx="2" fill="#6e6e6e"/><path d="M826.500 180h13.500v8.300h-18.400v-3.600h4.900z" fill="#fff"/></svg></div>
<div class="a mb" style="top:63px"><svg width="37" height="37" viewBox="812 212 37 37"><rect x="820" y="219.200" width="17.600" height="16.500" rx="2.500" fill="none" stroke="#d2d2d2" stroke-width="1.100"/><rect x="830" y="230.300" width="11" height="10" rx="2.500" fill="none" stroke="#d2d2d2" stroke-width="1.100"/><rect x="830.500" y="230.800" width="6.600" height="4.400" rx="1" fill="#bdbdbd"/></svg></div>
<div class="a mb" style="top:113px"><svg width="37" height="37" viewBox="812 262 37 37"><rect x="819.500" y="268.600" width="22" height="22" rx="2.500" fill="#c6c6c6"/><rect x="822.800" y="272.200" width="10.800" height="7.600" rx="2.500" fill="#fff"/></svg></div>
<div class="a mb" style="top:163px"><svg width="37" height="37" viewBox="812 312 37 37"><rect x="820" y="319.200" width="21" height="21" rx="2.500" fill="none" stroke="#d0d0d0" stroke-width="1.100"/><path d="M822.600 337v-15.500h4.400v15.500h3.300v-15.500h3.500v15.500h3.500v-10.800" fill="none" stroke="#cfcfcf" stroke-width="1.100"/></svg></div>
<div class="a" style="left:486px;top:16px;width:36px;height:36px;border-radius:4px;background:#fff;box-shadow:0 1px 5px rgba(0,0,0,.65)"><svg width="36" height="36" viewBox="1285 165 36 36"><defs><linearGradient id="lg" x1="0" y1="0" x2="1" y2="1"><stop offset="0" stop-color="#ececec"/><stop offset="1" stop-color="#cfcfcf"/></linearGradient></defs><path d="M1303 179l13.300 8.300-13.300 8.500-13.300-8.500z" fill="#cbcbcb" stroke="#b4b4b4" stroke-width=".7"/><path d="M1303 175l13.300 8.300-13.300 8.500-13.300-8.500z" fill="#d5d5d5" stroke="#b2b2b2" stroke-width=".7"/><path d="M1303 170.900l13.300 8.300-13.300 8.500-13.300-8.500z" fill="url(#lg)" stroke="#b6b6b6" stroke-width=".7"/></svg></div>
</div>
</body></html>
